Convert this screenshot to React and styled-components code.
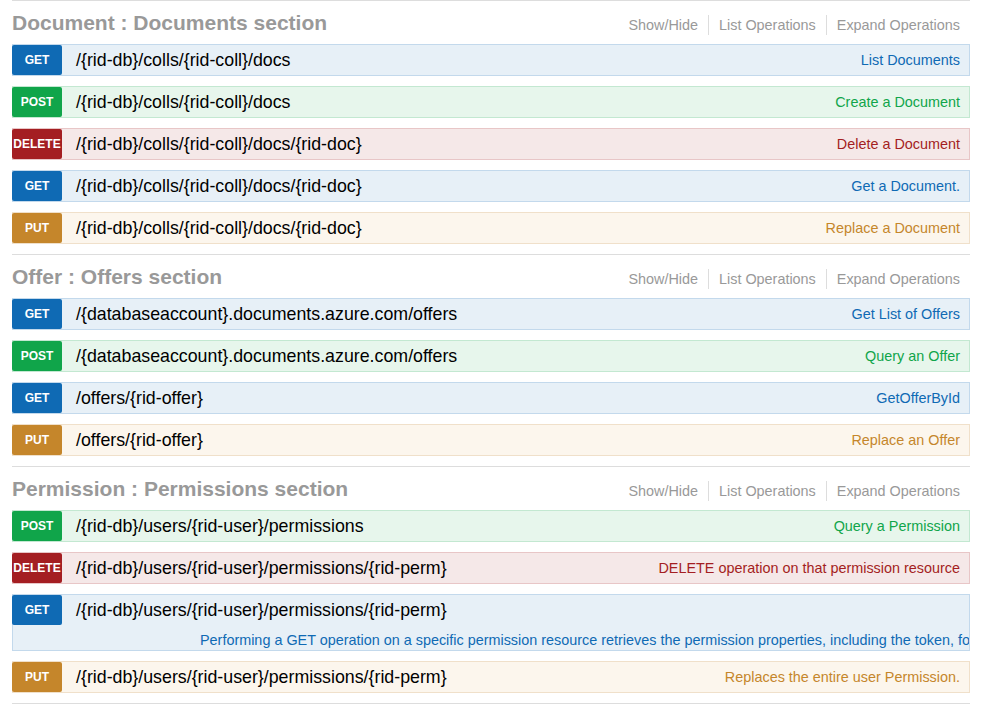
import React from "react";
import styled, { createGlobalStyle } from "styled-components";

const Global = createGlobalStyle`
  html, body { margin: 0; padding: 0; background: #fff; }
  body { font-family: "Liberation Sans", Arial, sans-serif; }
`;

const METHODS = {
  get: { badge: "#0f6ab4", bg: "#e7f0f7", border: "#c3d9ec" },
  post: { badge: "#10a54a", bg: "#e7f6ec", border: "#c3e8d1" },
  delete: { badge: "#a41e22", bg: "#f5e8e8", border: "#e8c6c7" },
  put: { badge: "#c5862b", bg: "#fcf6ed", border: "#f0e0ca" },
};

const Page = styled.div`
  padding: 0 12px;
`;

const Section = styled.section`
  border-top: 1px solid #ddd;
`;

const Heading = styled.div`
  display: flex;
  align-items: center;
  height: 43px;
`;

const Title = styled.h2`
  margin: 0;
  font-size: 21px;
  font-weight: bold;
  color: #999;
`;

const Options = styled.ul`
  display: flex;
  align-items: center;
  list-style: none;
  margin: 0 0 0 auto;
  padding: 4px 0 0 0;
`;

const Option = styled.li`
  font-size: 14.4px;
  line-height: 20px;
  color: #999;
  padding: 0 10px;
  border-left: ${(p) => (p.$first ? "none" : "1px solid #ddd")};
`;

const Ops = styled.div``;

const Op = styled.div`
  box-sizing: border-box;
  background: ${(p) => METHODS[p.$m].bg};
  border: 1px solid ${(p) => METHODS[p.$m].border};
  margin-bottom: 10px;
`;

const OpRow = styled.div`
  display: flex;
  align-items: center;
  height: 30px;
`;

const Badge = styled.span`
  flex: none;
  width: 50px;
  height: 30px;
  margin-left: -1px;
  display: flex;
  align-items: center;
  justify-content: center;
  background: ${(p) => METHODS[p.$m].badge};
  color: #fff;
  font-size: 12px;
  font-weight: bold;
  border-radius: 2px;
`;

const Path = styled.span`
  margin-left: 14px;
  font-size: 17.8px;
  color: #000;
  white-space: nowrap;
`;

const Summary = styled.span`
  margin-left: auto;
  padding-right: 9px;
  font-size: 14.4px;
  color: ${(p) => METHODS[p.$m].badge};
  white-space: nowrap;
`;

const LongSummary = styled.div`
  height: 25px;
  line-height: 20px;
  padding: 5px 9px 0 187px;
  box-sizing: border-box;
  font-size: 14.4px;
  color: ${(p) => METHODS[p.$m].badge};
  white-space: nowrap;
  overflow: hidden;
`;

const sections = [
  {
    title: "Document : Documents section",
    ops: [
      ["get", "/{rid-db}/colls/{rid-coll}/docs", "List Documents"],
      ["post", "/{rid-db}/colls/{rid-coll}/docs", "Create a Document"],
      ["delete", "/{rid-db}/colls/{rid-coll}/docs/{rid-doc}", "Delete a Document"],
      ["get", "/{rid-db}/colls/{rid-coll}/docs/{rid-doc}", "Get a Document."],
      ["put", "/{rid-db}/colls/{rid-coll}/docs/{rid-doc}", "Replace a Document"],
    ],
  },
  {
    title: "Offer : Offers section",
    ops: [
      ["get", "/{databaseaccount}.documents.azure.com/offers", "Get List of Offers"],
      ["post", "/{databaseaccount}.documents.azure.com/offers", "Query an Offer"],
      ["get", "/offers/{rid-offer}", "GetOfferById"],
      ["put", "/offers/{rid-offer}", "Replace an Offer"],
    ],
  },
  {
    title: "Permission : Permissions section",
    ops: [
      ["post", "/{rid-db}/users/{rid-user}/permissions", "Query a Permission"],
      ["delete", "/{rid-db}/users/{rid-user}/permissions/{rid-perm}", "DELETE operation on that permission resource"],
      [
        "get",
        "/{rid-db}/users/{rid-user}/permissions/{rid-perm}",
        "Performing a GET operation on a specific permission resource retrieves the permission properties, including the token, for the user.",
        true,
      ],
      ["put", "/{rid-db}/users/{rid-user}/permissions/{rid-perm}", "Replaces the entire user Permission."],
    ],
  },
];

export default function App() {
  return (
    <Page>
      <Global />
      {sections.map((s) => (
        <Section key={s.title}>
          <Heading>
            <Title>{s.title}</Title>
            <Options>
              <Option $first>Show/Hide</Option>
              <Option>List Operations</Option>
              <Option>Expand Operations</Option>
            </Options>
          </Heading>
          <Ops>
            {s.ops.map(([m, path, summary, long], i) => (
              <Op key={i} $m={m}>
                <OpRow>
                  <Badge $m={m}>{m.toUpperCase()}</Badge>
                  <Path>{path}</Path>
                  {!long && <Summary $m={m}>{summary}</Summary>}
                </OpRow>
                {long && <LongSummary $m={m}>{summary}</LongSummary>}
              </Op>
            ))}
          </Ops>
        </Section>
      ))}
      <Section />
    </Page>
  );
}
